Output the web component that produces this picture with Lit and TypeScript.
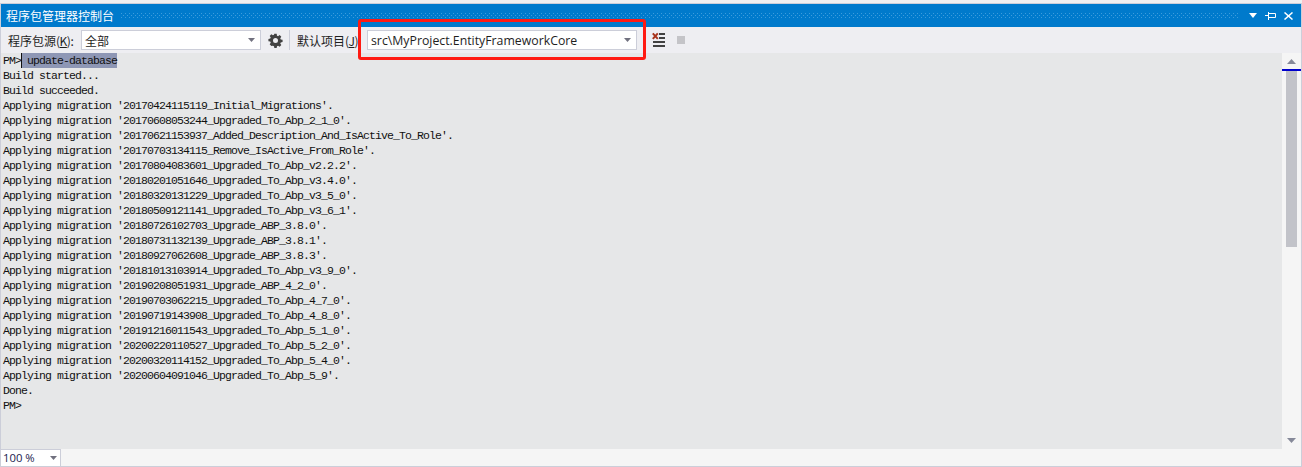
import { LitElement, html, css } from "lit";
import { customElement } from "lit/decorators.js";

const LINES = [
  "Build started...",
  "Build succeeded.",
  "Applying migration '20170424115119_Initial_Migrations'.",
  "Applying migration '20170608053244_Upgraded_To_Abp_2_1_0'.",
  "Applying migration '20170621153937_Added_Description_And_IsActive_To_Role'.",
  "Applying migration '20170703134115_Remove_IsActive_From_Role'.",
  "Applying migration '20170804083601_Upgraded_To_Abp_v2.2.2'.",
  "Applying migration '20180201051646_Upgraded_To_Abp_v3.4.0'.",
  "Applying migration '20180320131229_Upgraded_To_Abp_v3_5_0'.",
  "Applying migration '20180509121141_Upgraded_To_Abp_v3_6_1'.",
  "Applying migration '20180726102703_Upgrade_ABP_3.8.0'.",
  "Applying migration '20180731132139_Upgrade_ABP_3.8.1'.",
  "Applying migration '20180927062608_Upgrade_ABP_3.8.3'.",
  "Applying migration '20181013103914_Upgraded_To_Abp_v3_9_0'.",
  "Applying migration '20190208051931_Upgrade_ABP_4_2_0'.",
  "Applying migration '20190703062215_Upgraded_To_Abp_4_7_0'.",
  "Applying migration '20190719143908_Upgraded_To_Abp_4_8_0'.",
  "Applying migration '20191216011543_Upgraded_To_Abp_5_1_0'.",
  "Applying migration '20200220110527_Upgraded_To_Abp_5_2_0'.",
  "Applying migration '20200320114152_Upgraded_To_Abp_5_4_0'.",
  "Applying migration '20200604091046_Upgraded_To_Abp_5_9'.",
  "Done.",
  "PM>",
];

const arrow = html`<svg class="arrow" width="7" height="4" viewBox="0 0 7 4"><path d="M0 0h7L3.500 4z" fill="#71717f"/></svg>`;

@customElement("app-root")
export class AppRoot extends LitElement {
  static styles = css`
    :host { display: block; width: 1302px; height: 467px; position: relative; overflow: hidden; background: #f0f0f0; font-family: "Noto Sans CJK SC", sans-serif; color: #1e1e1e; }
    .frame { height: 464px; margin-top: 3px; box-sizing: border-box; border: 1px solid #ccced9; display: flex; flex-direction: column; background: #f5f5f5; }
    .title { height: 23px; flex: none; background: #007acc; color: #fff; display: flex; align-items: center; padding: 0 8px 0 5px; font-size: 12px; }
    .title .t { line-height: 23px; width: 115px; flex: none; white-space: nowrap; }
    .dots { flex: 1; height: 5px; min-width: 0; margin-right: 10px; }
    .wbtns { display: flex; align-items: center; gap: 8px; }
    .bar { height: 26px; flex: none; background: #eeeef2; display: flex; align-items: center; font-size: 12px; padding-left: 7px; }
    .lbl { flex: none; white-space: nowrap; }
    .l1 { width: 67px; }
    .l2 { width: 60px; }
    .p { letter-spacing: -0.5px; }
    .combo { box-sizing: border-box; height: 20px; background: #fff; border: 1px solid #ccced9; display: flex; align-items: center; justify-content: space-between; padding: 0 5px 0 3px; flex: none; }
    .c1 { width: 180px; margin-left: 6px; }
    .c2 { width: 270px; margin-left: 10px; font-family: "Open Sans", sans-serif; font-size: 12.3px; }
    .gear { margin-left: 7px; flex: none; }
    .sep { width: 1px; height: 20px; background: #ccced9; margin: 0 7px 0 6px; flex: none; }
    .clr { margin-left: 15px; flex: none; }
    .stop { width: 8px; height: 8px; background: #c4c4c8; margin-left: 12px; flex: none; }
    .main { flex: 1; min-height: 0; display: flex; }
    .console { flex: 1; min-width: 0; background: #e6e7e8; padding-left: 2px; font-family: "Liberation Mono", monospace; font-size: 11.5px; letter-spacing: -0.9px; color: #111; white-space: pre; overflow: hidden; }
    .ln { height: 15px; line-height: 15px; }
    .sel { background: #8e97b5; display: inline-block; height: 15px; }
    .prompt { display: flex; }
    .caret { display: inline-block; width: 1px; height: 15px; background: #111; margin-right: -1px; position: relative; z-index: 1; }
    .scroll { width: 19px; flex: none; background: #f5f5f5; display: flex; flex-direction: column; align-items: center; position: relative; }
    .up { margin-top: 6px; flex: none; }
    .mark { position: absolute; left: 0; top: 16px; width: 19px; height: 2px; background: #0000cc; }
    .thumb { position: absolute; left: 4px; top: 18px; width: 11px; height: 176px; background: #c2c3c9; }
    .down { position: absolute; left: 5px; top: 385px; }
    .foot { height: 17px; flex: none; display: flex; background: #f5f5f5; }
    .zoom { width: 60px; height: 17px; box-sizing: border-box; background: #fff; border: 1px solid #ccced9; border-width: 1px 1px 0 0; display: flex; align-items: center; justify-content: space-between; padding: 0 3px 1px 2px; font-family: "Open Sans", sans-serif; font-size: 11.3px; color: #1b1b4e; }
    .red { position: absolute; left: 358px; top: 19px; width: 288px; height: 41px; box-sizing: border-box; border: 3px solid #ff1a12; border-radius: 3px; pointer-events: none; }
  `;

  render() {
    return html`<div class="frame">
      <div class="title">
        <span class="t">程序包管理器控制台</span>
        <svg class="dots" height="5">
          <defs><pattern id="p" width="4" height="4" patternUnits="userSpaceOnUse"><rect x="0" y="0" width="1" height="1" fill="#3d9cdc"/><rect x="2" y="2" width="1" height="1" fill="#3d9cdc"/></pattern></defs>
          <rect width="100%" height="5" fill="url(#p)"/>
        </svg>
        <div class="wbtns">
          <svg width="8" height="5" viewBox="0 0 8 5"><path d="M0 0h8L4 5z" fill="#fff"/></svg>
          <svg width="11" height="8" viewBox="0 0 11 8" fill="none" stroke="#fff"><path d="M0 3.500h3.500M3.500 0v8M3.500 1.500h7v4h-7"/></svg>
          <svg width="9" height="8" viewBox="0 0 9 8" fill="none" stroke="#fff" stroke-width="1.500"><path d="M0.500 0.500l8 7M8.500 0.500l-8 7"/></svg>
        </div>
      </div>
      <div class="bar">
        <span class="lbl l1">程序包源<span class="p">(<u>K</u>):</span></span>
        <div class="combo c1"><span>全部</span>${arrow}</div>
        <svg class="gear" width="15" height="15" viewBox="-1 -1 18 18"><path fill="#424242" fill-rule="evenodd" d="M6.600 0h2.800l.4 2.200 1.300.6 1.900-1.300 2 2-1.300 1.900.6 1.300 2.200.4v2.800l-2.200.4-.6 1.300 1.300 1.900-2 2-1.900-1.300-1.300.6-.4 2.200H6.600l-.4-2.200-1.300-.6L3 14.500l-2-2 1.300-1.900-.6-1.300L-.5 8.900V6.100l2.200-.4.600-1.300L1 2.500l2-2 1.900 1.300 1.300-.6zM8 5a3 3 0 1 0 0 6 3 3 0 0 0 0-6z"/></svg>
        <div class="sep"></div>
        <span class="lbl l2">默认项目<span class="p">(<u>J</u>)</span></span>
        <div class="combo c2"><span>src\\MyProject.EntityFrameworkCore</span>${arrow}</div>
        <svg class="clr" width="13" height="16" viewBox="0 0 13 16">
          <path fill="#424242" d="M7 1h6v2H7zM7 5h6v2H7zM1 9h12v2H1zM1 13h12v2H1z"/>
          <path d="M0.800 1.300l5 5.500M5.800 1.300l-5 5.500" stroke="#a8341c" stroke-width="2" fill="none"/>
        </svg>
        <div class="stop"></div>
      </div>
      <div class="main">
        <div class="console"><div class="ln prompt">PM><span class="caret"></span><span class="sel"> update-database</span></div>${LINES.map((l) => html`<div class="ln">${l}</div>`)}</div>
        <div class="scroll">
          <svg class="up" width="9" height="5" viewBox="0 0 9 5"><path d="M4.500 0L9 5H0z" fill="#868999"/></svg>
          <div class="mark"></div>
          <div class="thumb"></div>
          <svg class="down" width="9" height="5" viewBox="0 0 9 5"><path d="M0 0h9L4.500 5z" fill="#868999"/></svg>
        </div>
      </div>
      <div class="foot"><div class="zoom"><span>100 %</span>${arrow}</div></div>
    </div>
    <div class="red"></div>`;
  }
}
